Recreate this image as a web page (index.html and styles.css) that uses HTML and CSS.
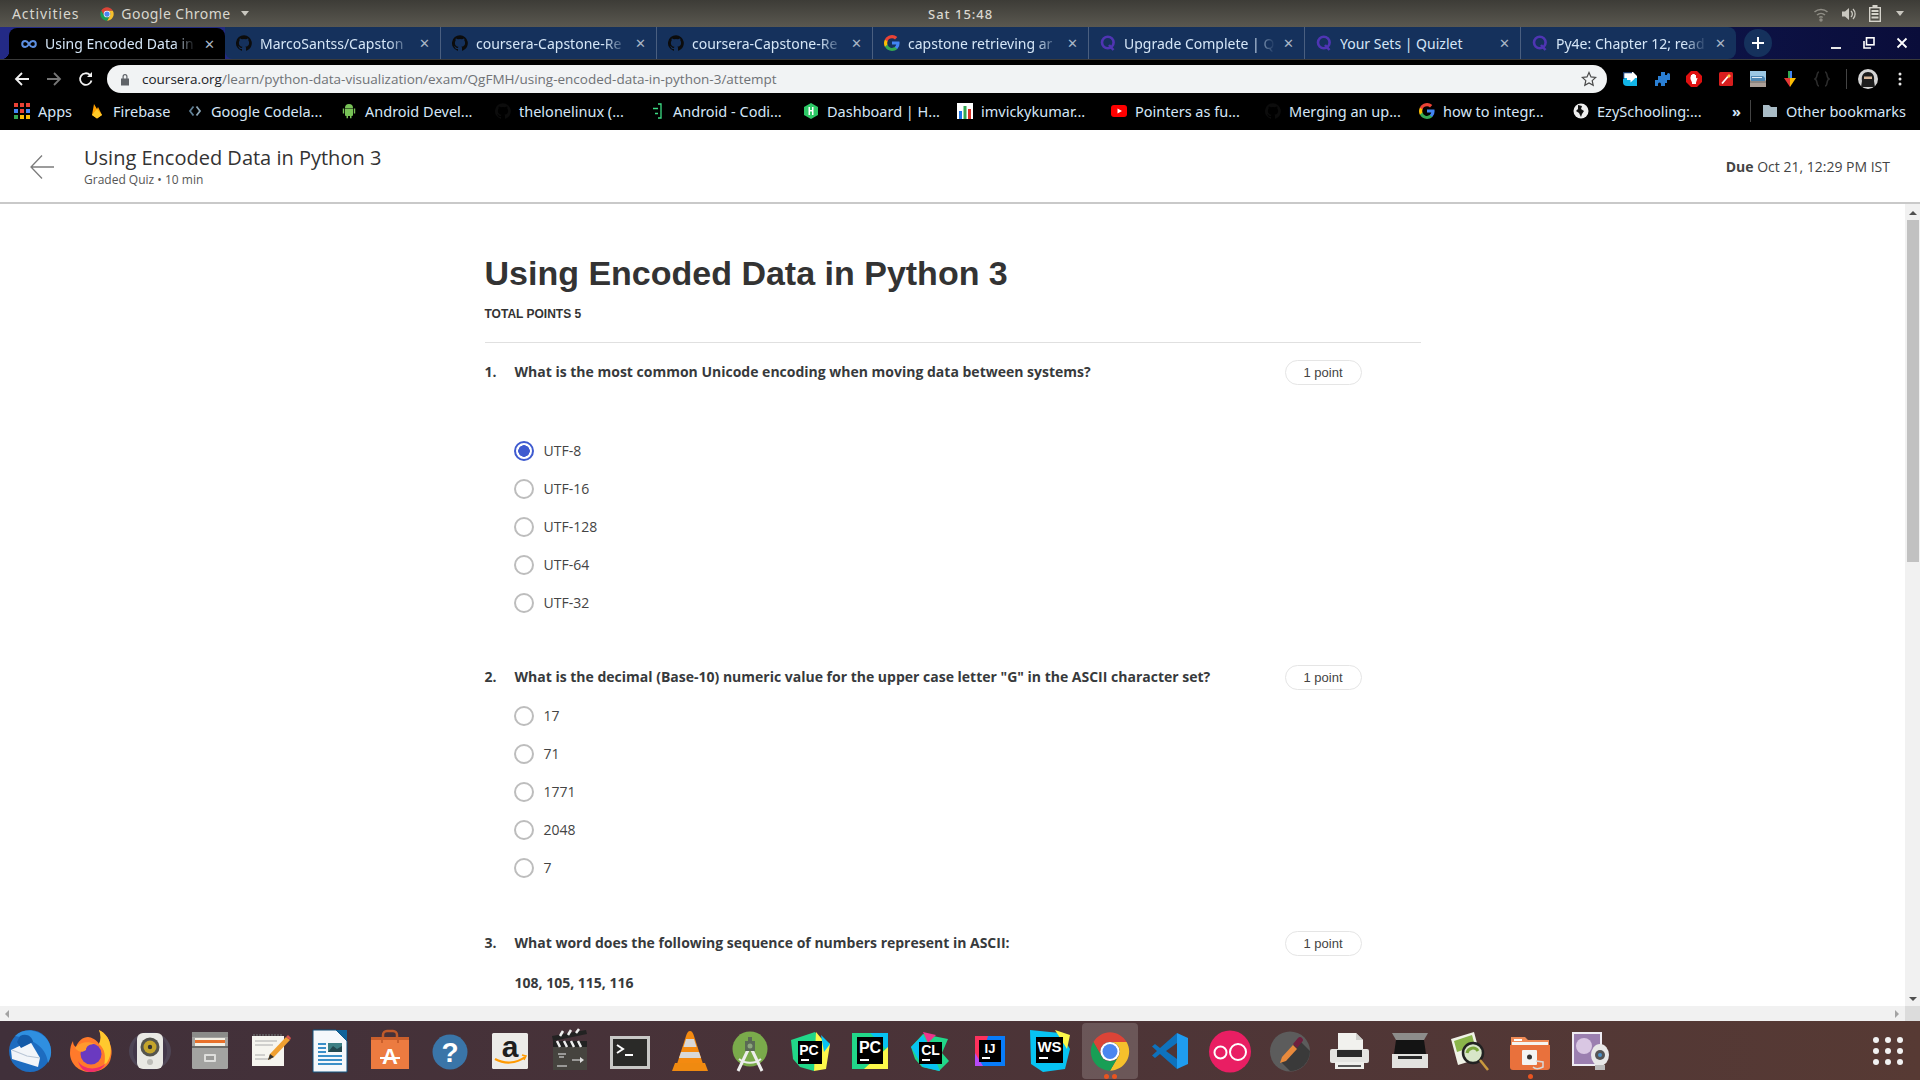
FILE: index.html
```html
<!DOCTYPE html>
<html>
<head>
  <title>Using Encoded Data in Python 3</title>
  <link rel="stylesheet" href="styles.css">
</head>
<body>
  <!-- Shared icons -->
  <svg class="defs" width="0" height="0">
    <symbol id="github" viewBox="0 0 16 16">
      <path fill="currentColor" d="M8 .2a8 8 0 0 0-2.500 15.600c.4.1.5-.2.5-.4v-1.400c-2.200.5-2.700-1-2.700-1-.4-.9-.9-1.200-.9-1.200-.7-.5.1-.5.1-.5.8.1 1.200.8 1.200.8.7 1.200 1.900.9 2.300.7.1-.5.3-.9.5-1.100-1.800-.2-3.600-.9-3.600-4 0-.9.3-1.600.8-2.100-.1-.2-.4-1 .1-2.100 0 0 .7-.2 2.200.8a7.600 7.600 0 0 1 4 0c1.500-1 2.200-.8 2.200-.8.4 1.100.2 1.900.1 2.100.5.6.8 1.300.8 2.100 0 3.100-1.900 3.700-3.700 3.900.3.3.6.8.6 1.500v2.200c0 .2.1.5.6.4A8 8 0 0 0 8 .2z"/>
    </symbol>
    <symbol id="quizlet" viewBox="0 0 16 16">
      <circle cx="7.800" cy="7.500" r="5.800" fill="none" stroke="#4f35b3" stroke-width="2.600"/>
      <path d="M9 10l4.500 5" stroke="#4f35b3" stroke-width="2.600" fill="none"/>
    </symbol>
    <symbol id="google" viewBox="0 0 16 16">
      <path d="M15.600 8.200c0-.6-.1-1.100-.2-1.600H8v3h4.300a3.700 3.700 0 0 1-1.600 2.400v2h2.600a7.800 7.800 0 0 0 2.300-5.800z" fill="#4285f4"/>
      <path d="M8 16c2.200 0 4-.7 5.300-1.900l-2.600-2a4.800 4.800 0 0 1-7.200-2.500H.9v2A8 8 0 0 0 8 16z" fill="#34a853"/>
      <path d="M3.500 9.600a4.800 4.800 0 0 1 0-3.100v-2H.9a8 8 0 0 0 0 7.200z" fill="#fbbc05"/>
      <path d="M8 3.200c1.200 0 2.200.4 3 1.200l2.300-2.300A8 8 0 0 0 .9 4.400l2.600 2.100A4.800 4.800 0 0 1 8 3.200z" fill="#ea4335"/>
    </symbol>
    <symbol id="chrome" viewBox="0 0 48 48">
      <path d="M4.100 12.500A23 23 0 0 1 43.900 12.500H24A11.500 11.500 0 0 0 14 30z" fill="#db4437"/>
      <path d="M43.900 12.500A23 23 0 0 1 24 47L34 30A11.500 11.500 0 0 0 24 12.500z" fill="#f6c02c"/>
      <path d="M24 47A23 23 0 0 1 4.100 12.500L14 30A11.500 11.500 0 0 0 34 30z" fill="#189e55"/>
      <circle cx="24" cy="24" r="11.500" fill="#fff"/>
      <circle cx="24" cy="24" r="9" fill="#4a86f0"/>
    </symbol>
    <symbol id="android" viewBox="0 0 16 16">
      <path fill="#78c257" d="M4 5.500h8V12a1 1 0 0 1-1 1h-.5v2.200H9V13H7v2.200H5.500V13H5a1 1 0 0 1-1-1zM1.800 5.500h1.400v5H1.800zM12.800 5.500h1.400v5h-1.400zM4 5a4 4 0 0 1 8 0z"/>
    </symbol>
  </svg>

  <div class="screen">
    <!-- Ubuntu top bar -->
    <div class="topbar">
      <div class="top-left">
        <span class="top-act">Activities</span>
        <span class="top-app">
          <svg class="ico-14"><use href="#chrome"/></svg>
          Google Chrome
          <i class="caret"></i>
        </span>
      </div>
      <div class="top-clock">Sat 15:48</div>
      <div class="top-tray">
        <svg width="16" height="16" viewBox="0 0 16 16" fill="none" stroke="#8f8d85" stroke-width="1.500"><path d="M1.500 6a9.500 9.500 0 0 1 13 0M4 9a6 6 0 0 1 8 0M6.300 11.500a2.700 2.700 0 0 1 3.400 0"/><circle cx="8" cy="14" r="1" fill="#8f8d85"/></svg>
        <svg width="16" height="16" viewBox="0 0 16 16" fill="none"><path d="M1 5.500h3L8 2v12l-4-3.500H1z" fill="#c9c7bf"/><path d="M10 5a4 4 0 0 1 0 6M12 3a7 7 0 0 1 0 10" stroke="#c9c7bf" stroke-width="1.300"/></svg>
        <svg width="12" height="17" viewBox="0 0 12 17" fill="none"><rect x=".7" y="2.700" width="10.600" height="13.600" stroke="#d5d3cb" stroke-width="1.400"/><rect x="3.500" y="0" width="5" height="2.500" fill="#d5d3cb"/><path d="M2.500 6h7M2.500 9h7M2.500 12.500h7" stroke="#d5d3cb" stroke-width="1.800"/></svg>
        <i class="caret"></i>
      </div>
    </div>

    <!-- Tabs -->
    <div class="tabstrip">
      <div class="tab tab-active">
        <svg class="fav" viewBox="0 0 16 16" fill="none" stroke="#5d8fe0" stroke-width="2"><path d="M8 8C6.500 5.500 5.500 5 4.200 5a3 3 0 0 0 0 6C5.500 11 6.500 10.500 8 8c1.500-2.500 2.500-3 3.800-3a3 3 0 0 1 0 6C10.500 11 9.500 10.500 8 8z"/></svg>
        <span class="tab-title">Using Encoded Data in</span>
        <span class="tab-x">✕</span>
      </div>
      <div class="tab tab-next">
        <svg class="fav fav-gh"><use href="#github"/></svg>
        <span class="tab-title">MarcoSantss/Capston</span>
        <span class="tab-x">✕</span>
      </div>
      <div class="tab">
        <svg class="fav fav-gh"><use href="#github"/></svg>
        <span class="tab-title">coursera-Capstone-Re</span>
        <span class="tab-x">✕</span>
      </div>
      <div class="tab">
        <svg class="fav fav-gh"><use href="#github"/></svg>
        <span class="tab-title">coursera-Capstone-Re</span>
        <span class="tab-x">✕</span>
      </div>
      <div class="tab">
        <svg class="fav"><use href="#google"/></svg>
        <span class="tab-title">capstone retrieving ar</span>
        <span class="tab-x">✕</span>
      </div>
      <div class="tab">
        <svg class="fav"><use href="#quizlet"/></svg>
        <span class="tab-title">Upgrade Complete | Q</span>
        <span class="tab-x">✕</span>
      </div>
      <div class="tab">
        <svg class="fav"><use href="#quizlet"/></svg>
        <span class="tab-title tab-title-short">Your Sets | Quizlet</span>
        <span class="tab-x">✕</span>
      </div>
      <div class="tab tab-last">
        <svg class="fav"><use href="#quizlet"/></svg>
        <span class="tab-title">Py4e: Chapter 12; read</span>
        <span class="tab-x">✕</span>
      </div>
      <div class="newtab">
        <svg width="14" height="14" viewBox="0 0 14 14"><path d="M7 1v12M1 7h12" stroke="#fff" stroke-width="2"/></svg>
      </div>
      <div class="winctl">
        <svg width="12" height="12" viewBox="0 0 12 12"><path d="M1 11h10" stroke="#e8e8e8" stroke-width="2"/></svg>
        <svg width="12" height="12" viewBox="0 0 12 12" fill="none" stroke="#fff" stroke-width="1.600"><rect x="3.500" y=".8" width="7.500" height="7"/><path d="M1 4v7h7"/></svg>
        <svg width="12" height="12" viewBox="0 0 12 12"><path d="M1.500 1.500l9 9M10.500 1.500l-9 9" stroke="#fff" stroke-width="1.800"/></svg>
      </div>
    </div>

    <!-- Address bar -->
    <div class="toolbar">
      <div class="nav-btns">
        <svg width="16" height="16" viewBox="0 0 16 16" fill="none" stroke="#f1f1f1" stroke-width="1.800"><path d="M15 8H2M8 2L2 8l6 6"/></svg>
        <svg width="16" height="16" viewBox="0 0 16 16" fill="none" stroke="#767676" stroke-width="1.800"><path d="M1 8h13M8 2l6 6-6 6"/></svg>
        <svg width="16" height="16" viewBox="0 0 16 16" fill="none" stroke="#f1f1f1" stroke-width="1.800"><path d="M13.500 9.500A5.800 5.800 0 1 1 12 4"/><path d="M14 1v5H9" fill="#f1f1f1" stroke="none"/></svg>
      </div>
      <div class="omnibox">
        <svg width="10" height="13" viewBox="0 0 10 13"><path fill="#5f6368" d="M1 5.500h8v7H1zM2.500 5.500v-2a2.500 2.500 0 0 1 5 0v2H6.300v-2a1.300 1.300 0 0 0-2.600 0v2z"/></svg>
        <span class="url"><b>coursera.org</b>/learn/python-data-visualization/exam/QgFMH/using-encoded-data-in-python-3/attempt</span>
        <svg class="star" width="16" height="16" viewBox="0 0 16 16" fill="none" stroke="#4a4a4a" stroke-width="1.200"><path d="M8 1.500l2 4.400 4.700.5-3.500 3.200 1 4.700L8 11.900l-4.200 2.400 1-4.700L1.300 6.400 6 5.900z"/></svg>
      </div>
      <div class="exts">
        <svg width="16" height="16" viewBox="0 0 16 16"><path fill="#fff" d="M1 1h10l4 4v3H1z"/><path fill="#12b5e8" d="M1 7h14v8H5a4 4 0 0 1-4-4z"/><path fill="#1a3a6a" d="M1 1h9v1.300H2.300V8H1z"/><path fill="#fff" d="M5 6h3.500V3.500L13 7.500l-4.500 4V9H5z"/></svg>
        <svg width="16" height="16" viewBox="0 0 16 16"><path fill="#2a7fd4" d="M7 1h4v3h2v-.5a1.500 1.500 0 0 1 3 0V9h-3v3h-2v3H7v-2a1.500 1.500 0 0 0-3 0v2H1V9h3V5h3z"/></svg>
        <svg width="16" height="16" viewBox="0 0 16 16"><path fill="#e01010" d="M5 0h6l5 5v6l-5 5H5l-5-5V5z"/><path fill="#fff" d="M5 5.500V4h1v-.8h1V3h1v.2h1V4h1v3.500l1-.8.500.5L10 11.500V13H6v-1.500L4.500 8V5.500z"/></svg>
        <svg width="16" height="16" viewBox="0 0 16 16"><rect x="1" y="1" width="14" height="14" rx="1.500" fill="#d81e1e"/><path d="M4 12.500l6-7" stroke="#fff" stroke-width="1.800"/><path d="M11 2.500l.8 1.700 1.700.8-1.700.8-.8 1.700-.8-1.700-1.700-.8 1.700-.8z" fill="#ffd34d"/></svg>
        <svg width="16" height="16" viewBox="0 0 16 16"><rect width="16" height="9" fill="#9cc7e3"/><rect y="9" width="16" height="7" fill="#ab9f97"/><path d="M1 5h12l2 2v3H1z" fill="#4f87b3"/><path d="M2 6.500h10" stroke="#e5eef5"/><path d="M0 11h16" stroke="#6f6f6f"/></svg>
        <svg width="16" height="16" viewBox="0 0 16 16"><path d="M6 0h2v8H6z" fill="#34a853"/><path d="M8 0h2v8H8z" fill="#4285f4"/><path d="M2 7h6v9z" fill="#e53935"/><path d="M8 7h6l-6 9z" fill="#fbbc05"/></svg>
        <svg width="16" height="16" viewBox="0 0 16 16" fill="none" stroke="#2c2c2c" stroke-width="1.500"><path d="M5 1C2 1 4 7 1 8c3 1 1 7 4 7M11 1c3 0 1 6 4 7-3 1-1 7-4 7"/></svg>
        <i class="ext-sep"></i>
        <svg width="20" height="20" viewBox="0 0 20 20"><circle cx="10" cy="10" r="10" fill="#d4d4d4"/><path d="M4 12c-1-6 2-9 6-9s7 3 6 9l1 6H3z" fill="#1d1d1d"/><rect x="6" y="7.500" width="8" height="2.500" fill="#d8b79a"/></svg>
        <svg class="ext-menu" width="4" height="14" viewBox="0 0 4 14" fill="#e8e8e8"><circle cx="2" cy="2" r="1.500"/><circle cx="2" cy="7" r="1.500"/><circle cx="2" cy="12" r="1.500"/></svg>
      </div>
    </div>

    <!-- Bookmarks -->
    <div class="bookmarks">
      <div class="bm bm-apps">
        <svg class="fav" viewBox="0 0 16 16"><g fill="#e94235"><rect width="4" height="4"/><rect x="6" width="4" height="4"/><rect x="12" width="4" height="4"/></g><g fill="#4285f4"><rect y="6" width="4" height="4"/><rect x="12" y="6" width="4" height="4"/></g><rect x="6" y="6" width="4" height="4" fill="#e94235"/><g fill="#fbbc05"><rect x="6" y="12" width="4" height="4"/><rect x="12" y="12" width="4" height="4"/></g><rect y="12" width="4" height="4" fill="#34a853"/></svg>
        Apps
      </div>
      <div class="bm bm-fire">
        <svg class="fav" viewBox="0 0 16 16"><path fill="#ffa000" d="M3 12L5 1l3 5 1-2 4 8-5 3.500z"/><path fill="#ffca28" d="M3 12l5-6 5 6-5 3.500z"/></svg>
        Firebase
      </div>
      <div class="bm">
        <svg class="fav" viewBox="0 0 16 16" fill="none" stroke-width="1.800"><path d="M6.500 3.500L3 8l3.500 4.500" stroke="#5f7f95"/><path d="M9.500 3.500L13 8l-3.500 4.500" stroke="#8aa4b5"/></svg>
        Google Codela...
      </div>
      <div class="bm">
        <svg class="fav"><use href="#android"/></svg>
        Android Devel...
      </div>
      <div class="bm">
        <svg class="fav fav-gh"><use href="#github"/></svg>
        thelonelinux (...
      </div>
      <div class="bm">
        <svg class="fav" viewBox="0 0 16 16" fill="none" stroke="#3ddc84" stroke-width="1.300"><path d="M9 1h3v14H9M4 5.500h5M6 10.500h3"/></svg>
        Android - Codi...
      </div>
      <div class="bm">
        <svg class="fav" viewBox="0 0 16 16"><path fill="#2ec866" d="M8 0l7 4v8l-7 4-7-4V4z"/><path fill="#fff" d="M5.500 4H7v3h2V4h1.500v8H9V8.500H7V12H5.500z"/></svg>
        Dashboard | H...
      </div>
      <div class="bm">
        <svg class="fav" viewBox="0 0 16 16"><rect width="16" height="16" fill="#fff"/><rect x="2" y="8" width="3" height="8" fill="#1a73e8"/><rect x="6.500" y="3" width="3" height="13" fill="#34a853"/><rect x="11" y="6" width="3" height="10" fill="#d93025"/></svg>
        imvickykumar...
      </div>
      <div class="bm">
        <svg class="fav" viewBox="0 0 16 16"><rect y="2" width="16" height="12" rx="3" fill="#f00"/><path d="M6.500 5.500v5L11 8z" fill="#fff"/></svg>
        Pointers as fu...
      </div>
      <div class="bm">
        <svg class="fav fav-gh"><use href="#github"/></svg>
        Merging an up...
      </div>
      <div class="bm">
        <svg class="fav"><use href="#google"/></svg>
        how to integr...
      </div>
      <div class="bm bm-ezy">
        <svg class="fav" viewBox="0 0 16 16"><circle cx="8" cy="8" r="7.500" fill="#eee"/><path d="M5 2l4 1-1 3 3 2-2 3-1 3-2-4-3-2 2-2z" fill="#111"/></svg>
        EzySchooling:...
      </div>
      <div class="bm-more">»</div>
      <div class="bm-other">
        <svg class="fav" viewBox="0 0 16 16"><path fill="#a9bcc6" d="M1 2h6l2 2h6v10H1z"/></svg>
        Other bookmarks
      </div>
    </div>

    <!-- Course header -->
    <div class="page-head">
      <svg class="back" width="26" height="26" viewBox="0 0 26 26" fill="none" stroke="#7c7c7c" stroke-width="1.300"><path d="M25 13H2M13 1.500L2 13l11 11.500"/></svg>
      <div class="head-text">
        <div class="head-title">Using Encoded Data in Python 3</div>
        <div class="head-sub">Graded Quiz • 10 min</div>
      </div>
      <div class="due"><b>Due</b> Oct 21, 12:29 PM IST</div>
    </div>

    <div class="main">
      <div class="content">
        <div class="quiz">
          <h1>Using Encoded Data in Python 3</h1>
          <div class="total">TOTAL POINTS 5</div>

          <div class="question q1">
            <span class="q-num">1.</span>
            <span class="q-text">What is the most common Unicode encoding when moving data between systems?</span>
            <span class="pill">1 point</span>
          </div>
          <div class="options opts1">
            <div class="opt"><i class="radio radio-on"></i>UTF-8</div>
            <div class="opt"><i class="radio"></i>UTF-16</div>
            <div class="opt"><i class="radio"></i>UTF-128</div>
            <div class="opt"><i class="radio"></i>UTF-64</div>
            <div class="opt"><i class="radio"></i>UTF-32</div>
          </div>

          <div class="question q2">
            <span class="q-num">2.</span>
            <span class="q-text">What is the decimal (Base-10) numeric value for the upper case letter "G" in the ASCII character set?</span>
            <span class="pill">1 point</span>
          </div>
          <div class="options">
            <div class="opt"><i class="radio"></i>17</div>
            <div class="opt"><i class="radio"></i>71</div>
            <div class="opt"><i class="radio"></i>1771</div>
            <div class="opt"><i class="radio"></i>2048</div>
            <div class="opt"><i class="radio"></i>7</div>
          </div>

          <div class="question q3">
            <span class="q-num">3.</span>
            <span class="q-text">What word does the following sequence of numbers represent in ASCII:</span>
            <span class="pill">1 point</span>
          </div>
          <div class="seq">108, 105, 115, 116</div>
        </div>
      </div>
      <div class="vscroll">
        <i class="arr arr-up"></i>
        <div class="vthumb"></div>
        <div class="vrest"></div>
        <i class="arr arr-down"></i>
      </div>
    </div>

    <div class="hscroll">
      <i class="arr arr-left"></i>
      <i class="arr arr-right"></i>
      <i class="corner"></i>
    </div>

    <!-- Dock -->
    <div class="dock">
      <!-- Thunderbird -->
      <div class="dock-item"><svg viewBox="0 0 48 48"><circle cx="24" cy="24" r="21" fill="#1d6cc0"/><path d="M9 9c8-8 22-7 30 1 7 7 8 18 3 26-1-13-12-24-33-27z" fill="#2f8fe0"/><path d="M5 23l19-9 10 17-2 9-26-8z" fill="#f2f5f9"/><path d="M6 23l15 6 13 2" fill="none" stroke="#b9c6d6" stroke-width="1.200"/><path d="M14 9c6-3 12 0 13 6l-12 6-4-6z" fill="#135aa8"/></svg></div>
      <!-- Firefox -->
      <div class="dock-item"><svg viewBox="0 0 48 48"><path d="M24 45C13 45 4 37 4 26c0-5 1-9 3-12 0 3 1 5 3 6 2-6 7-10 12-10 3 0 9 3 11 7 3-5 2-10 0-14 6 3 10 8 11 14 2 5 2 9 1 13-1 9-10 15-21 15z" fill="#ff7a2b"/><path d="M33 3c6 3 10 8 11 14 2 8 0 16-6 22 2-10 1-17-5-22 2-4 2-9 0-14z" fill="#ffc92e"/><path d="M12 34c5 9 20 10 28 2-4 7-10 9-16 9-6 0-10-4-12-11z" fill="#ef2e6a"/><circle cx="25" cy="27" r="10.500" fill="#6a3ac0"/><path d="M9 21c3-5 12-8 20-4-5 0-9 2-9 6-4 3-8 2-11-2z" fill="#ff9a2e"/></svg></div>
      <!-- Rhythmbox -->
      <div class="dock-item"><svg viewBox="0 0 48 48"><ellipse cx="24" cy="24" rx="21" ry="19" fill="#5d5f78" opacity=".45"/><ellipse cx="24" cy="24" rx="17" ry="19" fill="#43384a"/><rect x="11" y="6" width="26" height="36" rx="6" fill="#e9e9e4"/><circle cx="24" cy="20" r="9.500" fill="#55554e"/><circle cx="24" cy="20" r="6.500" fill="#c4a52c"/><circle cx="24" cy="20" r="2.200" fill="#333"/><circle cx="24" cy="35" r="3" fill="#bdbdb8"/></svg></div>
      <!-- Files -->
      <div class="dock-item"><svg viewBox="0 0 48 48"><rect x="6" y="5" width="36" height="37" rx="1.500" fill="#a3a3a1"/><rect x="6" y="5" width="36" height="5" fill="#8b8b89"/><rect x="9" y="11" width="30" height="8" fill="#f3efe4"/><rect x="9" y="13" width="30" height="3" fill="#e8702a"/><rect x="6" y="19" width="36" height="2" fill="#6a6a68"/><rect x="18" y="27" width="12" height="8" rx="1" fill="#dededc"/><rect x="20" y="29" width="8" height="4" fill="#9a9a98"/></svg></div>
      <!-- Notes -->
      <div class="dock-item"><svg viewBox="0 0 48 48"><rect x="6" y="9" width="32" height="30" fill="#f6f5ef"/><path d="M8 9v-2M11 9v-2M14 9v-2M17 9v-2M20 9v-2M23 9v-2M26 9v-2M29 9v-2M32 9v-2M35 9v-2" stroke="#666" stroke-width="1.500"/><path d="M9 14h22M9 18h18M9 28h10M9 32h16" stroke="#aaa" stroke-width="1"/><path d="M22 33l2-6 16-17 4 3-16 17z" fill="#f0a030"/><path d="M22 33l2-6 4 3z" fill="#333"/><path d="M40 10l4 3 1-2-3-3z" fill="#d9534f"/></svg></div>
      <!-- Writer -->
      <div class="dock-item"><svg viewBox="0 0 48 48"><path d="M7 3h23l11 11v31H7z" fill="#f5f8fb" stroke="#10537f" stroke-width="1"/><path d="M30 3h11v11z" fill="#10639a"/><rect x="22" y="16" width="14" height="9" fill="#3c7f84"/><path d="M22 25l5-6 4 3 5-3v6z" fill="#22484f"/><path d="M12 17h8M12 21h8M12 25h8M12 29h24M12 33h24M12 37h24" stroke="#3b8fc8" stroke-width="2"/></svg></div>
      <!-- Software -->
      <div class="dock-item"><svg viewBox="0 0 48 48"><path d="M17 11V8a4 4 0 0 1 4-4h6a4 4 0 0 1 4 4v3" fill="none" stroke="#bf5a2a" stroke-width="2.500"/><path d="M5 10h38v32H5z" fill="#ec7b40"/><path d="M5 10h38v3H5z" fill="#c95f2c"/><path d="M15 10h2v6h-2zM31 10h2v6h-2z" fill="#c95f2c"/><text x="24" y="37" class="dock-letter" font-size="22" fill="#fff">A</text><path d="M14 31h20" stroke="#fff" stroke-width="2"/></svg></div>
      <!-- Help -->
      <div class="dock-item"><svg viewBox="0 0 48 48"><circle cx="24" cy="25" r="17.500" fill="#3a75a8"/><text x="24" y="35" class="dock-letter" font-size="28" fill="#fff">?</text></svg></div>
      <!-- Amazon -->
      <div class="dock-item"><svg viewBox="0 0 48 48"><rect x="6" y="6" width="36" height="36" rx="1.500" fill="#ecebe8"/><text x="24" y="30" class="dock-letter" font-size="30" fill="#1e1e1e">a</text><path d="M9 32c9 5 21 5 30-2" fill="none" stroke="#f90" stroke-width="2.200"/><path d="M36 28l4 1-2 4" fill="none" stroke="#f90" stroke-width="1.500"/></svg></div>
      <!-- Videos -->
      <div class="dock-item"><svg viewBox="0 0 48 48"><rect x="7" y="19" width="34" height="24" fill="#46443f"/><rect x="7" y="14" width="34" height="6" fill="#222"/><path d="M11 14l3 6M18 14l3 6M25 14l3 6M32 14l3 6" stroke="#eee" stroke-width="2.500"/><path d="M6 9L40 3l1 4L7 14z" fill="#222"/><path d="M14 9l3-5M22 8l3-5M30 6l3-4" stroke="#eee" stroke-width="2.500"/><path d="M12 27h8M13 30h5M26 33h8M11 39h10" stroke="#b5b5b5" stroke-width="1.500"/><path d="M34 30l4 3-4 3z" fill="#ddd"/></svg></div>
      <!-- Terminal -->
      <div class="dock-item"><svg viewBox="0 0 48 48"><rect x="4" y="9" width="40" height="33" fill="#c8c8c6"/><rect x="7" y="12" width="34" height="27" fill="#2a2a28"/><path d="M11 18l6 4-6 4" fill="none" stroke="#fff" stroke-width="2"/><path d="M19 28h8" stroke="#fff" stroke-width="2"/></svg></div>
      <!-- VLC -->
      <div class="dock-item"><svg viewBox="0 0 48 48"><path d="M24 4c2 0 3 2 4 5l9 28H11l9-28c1-3 2-5 4-5z" fill="#f48a10"/><path d="M20 12h8l2.500 8h-13zM15 25h18l2 6H13z" fill="#d8d8d8"/><path d="M9 36h30l3 8H6z" fill="#f08a10"/></svg></div>
      <!-- Android Studio -->
      <div class="dock-item"><svg viewBox="0 0 48 48"><circle cx="24" cy="22" r="17.500" fill="#7aaa4b"/><path d="M22 23L12 44M26 23l10 21" stroke="#ededed" stroke-width="3" fill="none"/><path d="M13 32c6 5 16 5 22 0" stroke="#ededed" stroke-width="2" fill="none"/><path d="M22 10h4v4h3v10h-10V14h3z" fill="#5a6a55"/><circle cx="24" cy="19" r="2.500" fill="#8da77e"/></svg></div>
      <!-- PyCharm CE -->
      <div class="dock-item"><svg viewBox="0 0 48 48"><path d="M5 13l24-8 5 6-6 33-14-4-7-8z" fill="#21d789"/><path d="M30 5l5 6 9 6-4 25-12 2z" fill="#fcf84a"/><path d="M35 8l9 9-6 8z" fill="#07c3f2"/><rect x="12" y="14" width="24" height="23" fill="#000"/><text x="23" y="28" class="dock-letter" font-size="14" fill="#fff">PC</text><rect x="15" y="32" width="8" height="2" fill="#fff"/></svg></div>
      <!-- PyCharm -->
      <div class="dock-item"><svg viewBox="0 0 48 48"><rect x="6" y="6" width="36" height="36" fill="#21d789"/><path d="M24 6h18v18z" fill="#07c3f2"/><path d="M42 20v22H18z" fill="#fcf84a"/><rect x="11" y="10" width="26" height="27" fill="#000"/><text x="24" y="26" class="dock-letter" font-size="16" fill="#fff">PC</text><rect x="14" y="32" width="9" height="2" fill="#fff"/></svg></div>
      <!-- CLion -->
      <div class="dock-item"><svg viewBox="0 0 48 48"><path d="M5 20L17 7l25 5-6 14 7 8-10 10-17-4-7-8z" fill="#21d789"/><path d="M5 20l12 20 17 4-6-14-11-22z" fill="#07c3f2"/><path d="M17 5l13 3-8 8z" fill="#ed358c"/><rect x="13" y="15" width="23" height="22" fill="#000"/><text x="24.500" y="28" class="dock-letter" font-size="14" fill="#fff">CL</text><rect x="16" y="32" width="8" height="2" fill="#fff"/></svg></div>
      <!-- IntelliJ -->
      <div class="dock-item"><svg viewBox="0 0 48 48"><rect x="9" y="9" width="30" height="30" fill="#fe315d"/><path d="M22 9h17v30H13z" fill="#087cfa"/><path d="M9 26l8 13H9z" fill="#b74af7"/><rect x="13" y="13" width="22" height="22" fill="#000"/><text x="24" y="26" class="dock-letter" font-size="13" fill="#fff">IJ</text><rect x="16" y="30" width="8" height="2" fill="#fff"/></svg></div>
      <!-- WebStorm -->
      <div class="dock-item"><svg viewBox="0 0 48 48"><path d="M4 3l30 3 10 16-5 20-22 3-12-8z" fill="#07c3f2"/><path d="M29 3l15 5-3 14z" fill="#fcf84a"/><rect x="10" y="10" width="27" height="26" fill="#000"/><text x="23.500" y="25" class="dock-letter" font-size="15" fill="#fff">WS</text><rect x="13" y="30" width="9" height="2" fill="#fff"/></svg></div>
      <!-- Chrome -->
      <div class="dock-item dock-on"><svg viewBox="0 0 48 48"><use href="#chrome" x="4" y="4.500" width="40" height="40"/></svg><span class="dots"><i></i><i></i></span></div>
      <!-- VS Code -->
      <div class="dock-item"><svg viewBox="0 0 48 48"><path d="M31 6L14 21l-5-4-3 2.500L11 24l-5 4.500L9 31l5-4 17 15V32L20 24l11-8z" fill="#0e72bd"/><path d="M31 6l11 5v26l-11 5z" fill="#1f9cf0"/></svg></div>
      <!-- Fastoo -->
      <div class="dock-item"><svg viewBox="0 0 48 48"><circle cx="24" cy="24.500" r="21" fill="#e91e63"/><circle cx="14.500" cy="25.500" r="6" fill="none" stroke="#fff" stroke-width="2"/><circle cx="32" cy="25" r="8" fill="none" stroke="#fff" stroke-width="2"/></svg></div>
      <!-- Color picker -->
      <div class="dock-item"><svg viewBox="0 0 48 48"><circle cx="24" cy="24.500" r="20" fill="#5c5c5c"/><path d="M32 12l12 12a20 20 0 0 1-20 20l-9-9z" fill="#3a3a3a"/><path d="M14 36l2-6 11-12 4 4-11 12z" fill="#e88a3c"/><path d="M27 17l5-6a2.500 2.500 0 0 1 4 4l-5 6z" fill="#6e1f3e"/></svg></div>
      <!-- Printer -->
      <div class="dock-item"><svg viewBox="0 0 48 48"><path d="M12 6h18l7 7v11H12z" fill="#f1f1ee"/><path d="M30 6v7h7z" fill="#cfcfcc"/><rect x="4" y="22" width="39" height="14" rx="2" fill="#e4e4e1"/><rect x="11" y="23" width="25" height="7" fill="#2a2a2a"/><rect x="9" y="35" width="29" height="7" fill="#efefec"/><path d="M12 39h23" stroke="#555" stroke-width="2"/></svg></div>
      <!-- Scanner -->
      <div class="dock-item"><svg viewBox="0 0 48 48"><path d="M6 6h36l-4 7H10z" fill="#8d8d8b"/><path d="M10 13h28l2 14H8z" fill="#141414"/><rect x="6" y="27" width="36" height="14" fill="#e2e2df"/><rect x="12" y="29" width="24" height="3" fill="#2a2a2a"/></svg></div>
      <!-- Image viewer -->
      <div class="dock-item"><svg viewBox="0 0 48 48"><path d="M5 12L28 5l7 26-23 7z" fill="#f0f2e6"/><path d="M8 14l18-6 3 11-18 6z" fill="#8ab54a"/><circle cx="27" cy="26" r="10" fill="#d8e6c8" stroke="#222" stroke-width="2.500"/><path d="M34 33l8 10" stroke="#c99a3e" stroke-width="2.500"/><path d="M21 26a6 6 0 0 1 11-2" fill="none" stroke="#7aa63b" stroke-width="3"/></svg></div>
      <!-- Folder -->
      <div class="dock-item"><svg viewBox="0 0 48 48"><path d="M5 10h14l3 3h21v5H5z" fill="#ef8a56"/><path d="M8 12h8v2H8z" fill="#fff"/><path d="M6 15h36v4H6z" fill="#f4f4f0"/><path d="M4 18h40v22a3 3 0 0 1-3 3H7a3 3 0 0 1-3-3z" fill="#e9713c"/><rect x="16" y="23" width="15" height="15" rx="1" fill="#f3f3f3"/><circle cx="23.500" cy="30" r="2.500" fill="#333"/><path d="M30 34l7 1v5c-4 2-8 2-10 0" fill="none" stroke="#d8d8d8" stroke-width="1.500"/></svg><span class="dots"><i></i></span></div>
      <!-- Webcam -->
      <div class="dock-item"><svg viewBox="0 0 48 48"><rect x="6" y="5" width="30" height="34" fill="#efecf3"/><rect x="8" y="7" width="26" height="30" fill="#9b7fb0"/><circle cx="18" cy="19" r="8" fill="#d9c7e3"/><ellipse cx="34" cy="28" rx="9" ry="11" fill="#e8e8e8"/><circle cx="34" cy="28" r="5" fill="#555"/><circle cx="34" cy="28" r="2" fill="#4a90c8"/><rect x="29" y="38" width="10" height="5" fill="#bbb"/></svg></div>
      <div class="dock-grid"><i></i><i></i><i></i><i></i><i></i><i></i><i></i><i></i><i></i></div>
    </div>
  </div>
</body>
</html>
```

FILE: styles.css
```css
* {
  box-sizing: border-box;
}

body {
  margin: 0;
  font-family: "Open Sans", sans-serif;
  color: #333;
  background-color: #fff;
  overflow: hidden;
}

.defs {
  display: block;
  height: 0;
}

.screen {
  width: 1920px;
  height: 1080px;
  display: flex;
  flex-direction: column;
  overflow: hidden;
}

/* Top bar */
.topbar {
  height: 27px;
  display: flex;
  align-items: center;
  justify-content: space-between;
  padding: 0 12px;
  background: linear-gradient(#3d3c37, #5a5850);
  color: #d9d7cf;
  font-family: "Noto Sans", sans-serif;
  font-size: 14px;
  position: relative;
}

.top-left {
  display: flex;
  align-items: center;
  gap: 21px;
}

.top-act {
  letter-spacing: 0.9px;
}

.top-app {
  display: flex;
  align-items: center;
  gap: 7px;
  letter-spacing: 0.45px;
}

.ico-14 {
  width: 14px;
  height: 14px;
}

.caret {
  display: inline-block;
  border-left: 4.5px solid transparent;
  border-right: 4.5px solid transparent;
  border-top: 5px solid #c9c7bf;
  margin-left: 3px;
}

.top-clock {
  position: absolute;
  left: 928px;
  font-weight: 500;
  font-size: 13px;
  letter-spacing: 1px;
}

.top-tray {
  display: flex;
  align-items: center;
  gap: 12px;
  margin-right: 4px;
}

/* Tabs */
.tabstrip {
  height: 33px;
  display: flex;
  background: linear-gradient(90deg, #232a86, #1b2a72 40%, #101a56 75%, #0a0d3a);
  padding-left: 9px;
  border-bottom: 1px solid #3a3a3a;
  color: #d5e6f7;
  font-family: "Noto Sans", sans-serif;
  font-size: 14px;
}

.tab {
  width: 216px;
  height: 32px;
  display: flex;
  align-items: center;
  gap: 8px;
  padding: 0 8px 0 11px;
  background-color: #15315c;
  border-right: 1px solid #4a5f80;
  position: relative;
}

.tab-active {
  background-color: #000;
  border-right: 0;
  border-radius: 8px 8px 0 0;
  padding-left: 12px;
  margin-top: 1px;
  height: 31px;
}

/* little flare at the foot of the active tab */
.tab-active::before {
  content: "";
  position: absolute;
  left: -8px;
  bottom: 0;
  width: 8px;
  height: 8px;
  background: radial-gradient(circle at 0 0, transparent 8px, #000 8.5px);
}

.tab-next {
  border-bottom-left-radius: 8px;
}

.tab-last {
  border-right: 0;
  border-radius: 0 8px 8px 0;
  width: 215px;
}

.fav {
  width: 16px;
  height: 16px;
  flex-shrink: 0;
}

.fav-gh {
  color: #0c0c0c;
}

.tab-title {
  flex: 1;
  white-space: nowrap;
  overflow: hidden;
  mask-image: linear-gradient(90deg, #000 85%, transparent);
  -webkit-mask-image: linear-gradient(90deg, #000 85%, transparent);
}

.tab-title-short {
  mask-image: none;
  -webkit-mask-image: none;
}

.tab-x {
  font-size: 13px;
  line-height: 16px;
  color: #a9b6c6;
  width: 13px;
}

.newtab {
  width: 28px;
  height: 28px;
  margin: 2px 0 0 8px;
  border-radius: 50%;
  background-color: #15315c;
  display: flex;
  align-items: center;
  justify-content: center;
}

.winctl {
  margin-left: auto;
  display: flex;
  align-items: center;
  gap: 21px;
  padding-right: 12px;
}

/* Toolbar */
.toolbar {
  height: 33px;
  display: flex;
  align-items: flex-start;
  padding-top: 5px;
  background-color: #000;
}

.nav-btns {
  width: 107px;
  height: 28px;
  display: flex;
  align-items: center;
  gap: 16px;
  padding-left: 14px;
}

.omnibox {
  width: 1500px;
  height: 28px;
  display: flex;
  align-items: center;
  padding: 0 10px 0 13px;
  background-color: #f1f3f4;
  border-radius: 14px;
}

.url {
  margin-left: 12px;
  font-size: 13.5px;
  color: #6f7276;
  white-space: nowrap;
}

.url b {
  font-weight: 400;
  color: #202124;
}

.star {
  margin-left: auto;
}

.exts {
  height: 28px;
  display: flex;
  align-items: center;
  gap: 16px;
  padding-left: 15px;
}

.ext-sep {
  width: 1px;
  height: 20px;
  background-color: #444;
  margin-right: -5px;
}

.ext-menu {
  margin-left: 4px;
}

/* Bookmarks */
.bookmarks {
  height: 37px;
  display: flex;
  align-items: center;
  padding: 0 0 1px 14px;
  background-color: #000;
  color: #d5e6f7;
  font-family: "Noto Sans", sans-serif;
  font-size: 14.5px;
}

.bm {
  width: 154px;
  display: flex;
  align-items: center;
  gap: 8px;
  white-space: nowrap;
}

.bm-apps {
  width: 75px;
}

.bm-fire {
  width: 98px;
}

.bm-ezy {
  width: 159px;
}

.bm-more {
  width: 18px;
  font-weight: 700;
}

.bm-other {
  display: flex;
  align-items: center;
  gap: 8px;
  padding-left: 11px;
  border-left: 1px solid #444;
  height: 22px;
  white-space: nowrap;
}

/* Course header */
.page-head {
  height: 74px;
  display: flex;
  align-items: center;
  padding: 0 30px 0 29px;
  background-color: #fff;
  border-bottom: 2px solid #c9c9c9;
}

.back {
  margin-top: 2px;
}

.head-text {
  margin-left: 29px;
}

.head-title {
  font-size: 20px;
  line-height: 26px;
  color: #333;
}

.head-sub {
  font-size: 12px;
  line-height: 17px;
  color: #555;
}

.due {
  margin-left: auto;
  font-size: 14px;
  color: #444;
}

/* Quiz */
.main {
  flex: 1;
  display: flex;
  min-height: 0;
}

.content {
  flex: 1;
  overflow: hidden;
}

.quiz {
  width: 936px;
  margin: 0 auto;
  padding-top: 45px;
}

h1 {
  margin: 0;
  font-family: "Liberation Sans", sans-serif;
  font-size: 34px;
  line-height: 48px;
  font-weight: 700;
  color: #333;
}

.total {
  margin-top: 9px;
  padding-bottom: 20px;
  border-bottom: 1px solid #e0e0e0;
  font-family: "Liberation Sans", sans-serif;
  font-size: 12px;
  line-height: 16px;
  font-weight: 700;
  color: #333;
}

.question {
  display: flex;
  align-items: flex-start;
  width: 877px;
  font-size: 14px;
  line-height: 24px;
  font-weight: 700;
  color: #373a3c;
}

.q1 {
  margin-top: 17px;
}

.q2 {
  margin-top: 43px;
}

.q3 {
  margin-top: 44px;
}

.q-num {
  width: 30px;
}

.q-text {
  flex: 1;
}

.pill {
  width: 77px;
  height: 25px;
  border: 1px solid #e5e5e5;
  border-radius: 13px;
  font-family: "Liberation Sans", sans-serif;
  font-size: 13px;
  font-weight: 400;
  line-height: 24px;
  text-align: center;
  color: #444;
}

.options {
  padding: 7px 0 0 29px;
}

.opts1 {
  padding-top: 47px;
}

.opt {
  height: 38px;
  padding-bottom: 2px;
  display: flex;
  align-items: center;
  gap: 10px;
  font-size: 14px;
  color: #444;
}

.radio {
  width: 20px;
  height: 20px;
  margin-top: 2px;
  border: 2px solid #bdbdbd;
  border-radius: 50%;
  background-color: #fff;
  flex-shrink: 0;
}

.radio-on {
  border-color: #3f5bd0;
  background: radial-gradient(circle, #3f5bd0 0 5.5px, #fff 6px);
}

.seq {
  margin: 15px 0 0 30px;
  font-size: 14px;
  line-height: 24px;
  font-weight: 700;
  color: #373a3c;
}

/* Scrollbars */
.vscroll {
  width: 15px;
  display: flex;
  flex-direction: column;
  align-items: center;
  background-color: #f1f1f1;
}

.vthumb {
  width: 12px;
  height: 342px;
  margin-top: 5px;
  background-color: #c1c1c1;
}

.vrest {
  flex: 1;
}

.arr {
  display: block;
  border: 4px solid transparent;
}

.arr-up {
  border-bottom-color: #505050;
  border-top-width: 0;
  margin-top: 7px;
}

.arr-down {
  border-top-color: #505050;
  border-bottom-width: 0;
  margin-bottom: 5px;
}

.hscroll {
  height: 15px;
  display: flex;
  align-items: center;
  background-color: #f1f1f1;
}

.arr-left {
  border-right-color: #a3a3a3;
  border-left-width: 0;
  margin-left: 5px;
}

.arr-right {
  border-left-color: #a3a3a3;
  border-right-width: 0;
  margin-left: auto;
  margin-right: 6px;
}

.corner {
  width: 15px;
  height: 15px;
  background-color: #dcdcdc;
}

/* Dock */
.dock {
  height: 59px;
  display: flex;
  align-items: center;
  background: linear-gradient(90deg, #40303a, #4a3338 45%, #573a34);
}

.dock-item {
  width: 60px;
  height: 56px;
  padding: 4px 6px;
  position: relative;
  flex-shrink: 0;
}

.dock-item svg {
  width: 48px;
  height: 48px;
  display: block;
}

.dock-on {
  background-color: rgba(255, 255, 255, 0.17);
  border-radius: 4px;
  width: 56px;
  margin: 0 2px;
  padding: 4px;
}

.dock-letter {
  font-family: "Liberation Sans", sans-serif;
  font-weight: 700;
  text-anchor: middle;
}

.dots {
  position: absolute;
  left: 0;
  right: 0;
  bottom: 0;
  display: flex;
  justify-content: center;
  gap: 3px;
}

.dots i {
  width: 5px;
  height: 5px;
  border-radius: 50%;
  background-color: #e95420;
}

.dock-grid {
  margin-left: auto;
  margin-right: 17px;
  display: grid;
  grid-template-columns: repeat(3, 6px);
  gap: 5px 6px;
}

.dock-grid i {
  width: 6px;
  height: 6px;
  border-radius: 50%;
  background-color: #f2f2f2;
}
```
